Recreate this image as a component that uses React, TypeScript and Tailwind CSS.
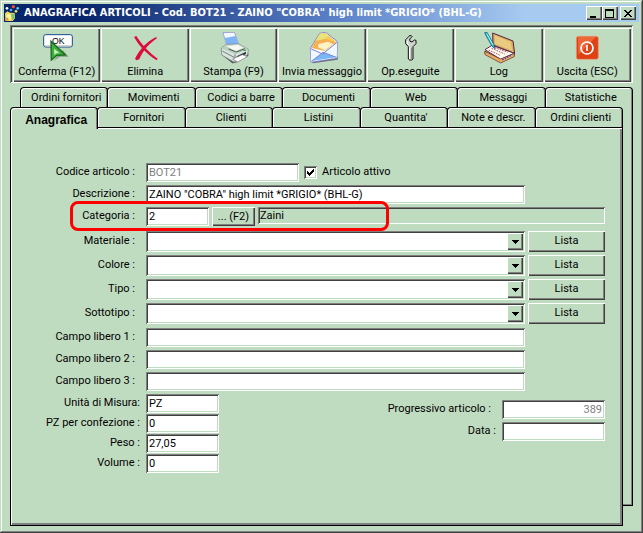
import React from 'react';

const raised = 'shadow-[inset_1px_1px_0_#fff,inset_-1px_-1px_0_#404040,inset_-2px_-2px_0_#808080]';
const groove = 'shadow-[inset_1px_1px_0_#808080,inset_-1px_-1px_0_#fff,inset_2px_2px_0_#404040]';
const sunken =
  'shadow-[inset_1px_1px_0_#808080,inset_-1px_-1px_0_#fff,inset_2px_2px_0_#404040,inset_-2px_-2px_0_#c0dcc0]';
const field = `h-[19px] min-w-0 bg-white px-[3px] outline-none ${sunken}`;

const OkIcon = () => (
  <svg viewBox="120 96 96 96" className="h-8 w-8">
    <rect x="128" y="104" width="86" height="37" rx="6" fill="#fff" stroke="#174a94" strokeWidth="3" />
    <path d="M132 137h78" stroke="#d8d4c0" strokeWidth="4" />
    <text x="153" y="132" fontSize="26" fontFamily="Liberation Sans, sans-serif" fill="#000">OK</text>
    <path d="M157 184l20-14 26 0-18-20z" fill="#8a9a8a" />
    <path d="M150 124l43 41-25 1-17 14z" fill="#3fae3f" stroke="#176b1c" strokeWidth="4" />
    <path d="M159 146l17 14-10 0-6 5z" fill="#c8f0b8" />
  </svg>
);

const DeleteIcon = () => (
  <svg viewBox="384 96 96 96" className="h-8 w-8">
    <path d="M399 111l7-3c16 25 38 50 64 68l-3 5c-29-18-51-41-68-70z" fill="#dc0c3c" />
    <path d="M465 111l3 4c-23 15-42 36-53 63l-9 3-4-5c14-28 35-51 63-65z" fill="#dc0c3c" />
  </svg>
);

const PrintIcon = () => (
  <svg viewBox="78 96 96 96" className="h-8 w-8">
    <path d="M91 166l30 24 10-1 38-22 0-8-30 18z" fill="#55555f" />
    <path d="M93 98l34-1 14 36-36 6z" fill="#f4f9ff" stroke="#8584c8" strokeWidth="2" />
    <path d="M98 114l33-6 8 24-34 5z" fill="#7eb4f4" />
    <path d="M88 144l15-11 38-1 28 16-2 16-38 24-40-23z" fill="#d9e4dc" stroke="#6f7580" strokeWidth="2" />
    <path d="M89 145l40 18 39-15-28-16-36 5z" fill="#b7d0bb" />
    <path d="M103 139l34-5 18 9-24 10z" fill="#f5f7f3" />
    <path d="M110 147l23 9 25-10" fill="none" stroke="#555" strokeWidth="3" />
    <path d="M129 163l0 24 M91 153l37 20" stroke="#777d80" strokeWidth="3" />
    <path d="M134 169l28-14 0 7-28 16z" fill="#343440" />
    <path d="M122 177l29-13 15 6-29 16z" fill="#fff" stroke="#777" strokeWidth="2" />
    <path d="M154 151h8" stroke="#38a848" strokeWidth="4" />
  </svg>
);

const MailIcon = () => (
  <svg viewBox="342 96 96 96" className="h-8 w-8">
    <path d="M357 184l77-9 4-8-1 12-74 11z" fill="#6b7590" />
    <path d="M355 145l28-45 18-3 36 28-3 48-77 13z" fill="#f8fbff" stroke="#8580d0" strokeWidth="3" />
    <path d="M359 143l24-42 17-2 33 27-34 23z" fill="#f7c94c" />
    <path d="M371 122l13-21 16-2 11 9-18 12z" fill="#e8e47a" />
    <path d="M371 123l29-7 31 12-33 25-38-9z" fill="#f4b052" />
    <path d="M379 132l30-7 15 8-26 18-20-9z" fill="#fff3c4" />
    <path d="M356 146l32 17 10-9 38-28-2 47-77 12z" fill="#eff7ff" />
    <path d="M359 183l35-26 39 15z" fill="#79b8f5" />
    <path d="M356 146l36 16 44-36 M358 184l35-27 40 15" fill="none" stroke="#7c82cf" strokeWidth="3" />
  </svg>
);

const WrenchIcon = () => (
  <svg viewBox="-21 96 96 96" className="h-8 w-8">
    <path
      d="M23 110l-9 9v12l8 9v37l4 3h6l4-3v-37l9-9v-10l-5-1-7 6-6-2-1-7 7-7-2-3h-6z"
      fill="#d0d4d0"
      stroke="#101010"
      strokeWidth="3"
    />
    <path d="M26 142v34" stroke="#fff" strokeWidth="4" />
    <path d="M31 143v33" stroke="#777" strokeWidth="3" />
    <path d="M19 122v8l6 6" fill="none" stroke="#fff" strokeWidth="3" />
  </svg>
);

const LogIcon = () => (
  <svg viewBox="246 96 96 96" className="h-8 w-8">
    <path d="M250 160l49 28 43-23 0-12-42 23-49-24z" fill="#72372d" />
    <path d="M275 99l61 24 5 37-65-25z" fill="#d8ae62" stroke="#5a2142" strokeWidth="3" />
    <path d="M281 106l48 20 5 26-52-20z" fill="#e8ca80" />
    <path d="M252 149l21-13 67 24-41 18z" fill="#fffdf2" stroke="#602848" strokeWidth="3" />
    <path d="M252 154l47 23 41-17v10l-41 19-47-25z" fill="#e2ab5e" stroke="#652b38" strokeWidth="2" />
    <path d="M263 150l34 16 M272 145l39 17 M281 143l39 14" stroke="#b15063" strokeWidth="3" strokeDasharray="5 3" />
    <path d="M304 179l26-13" stroke="#3030c0" strokeWidth="4" strokeDasharray="4 4" />
    <path d="M251 98l7-1 21 37 3 12-9-7-19-34z" fill="#21bdd5" stroke="#194c78" strokeWidth="2" />
    <path d="M257 101l19 34" stroke="#a4ffff" strokeWidth="3" />
  </svg>
);

const ExitIcon = () => (
  <svg viewBox="510 96 96 96" className="h-8 w-8">
    <rect x="526" y="109" width="66" height="69" rx="6" fill="#df4114" stroke="#e8a080" strokeWidth="2" />
    <path d="M531 111h54l-53 53z" fill="#ee6737" />
    <circle cx="558" cy="144" r="18" fill="none" stroke="#fff" strokeWidth="5" />
    <path d="M558 135v18" stroke="#fff" strokeWidth="5" />
  </svg>
);

const AppIcon = () => (
  <svg viewBox="15 12 48 54" className="h-[18px] w-4 shrink-0">
    <path d="M18 40l7-6 8 4 14 1 1 16-7 8H19z" fill="#f2d65c" />
    <path d="M22 45l8-4 6 4-1 14-13-1z" fill="#fff4a0" />
    <path d="M36 41l10 1 1 12-8 6z" fill="#73c96a" />
    <path d="M19 53h9v9h-9z" fill="#e6a02e" />
    <circle cx="24" cy="25" r="4" fill="#fff" />
    <circle cx="43" cy="20" r="5" fill="#ef4b30" />
    <circle cx="56" cy="25" r="4" fill="#48d5e8" />
    <circle cx="51" cy="34" r="4" fill="#f4e552" />
    <circle cx="36" cy="30" r="4" fill="#52a8f0" />
  </svg>
);

const actions = [
  { label: 'Conferma (F12)', icon: <OkIcon /> },
  { label: 'Elimina', icon: <DeleteIcon /> },
  { label: 'Stampa (F9)', icon: <PrintIcon /> },
  { label: 'Invia messaggio', icon: <MailIcon /> },
  { label: 'Op.eseguite', icon: <WrenchIcon /> },
  { label: 'Log', icon: <LogIcon /> },
  { label: 'Uscita (ESC)', icon: <ExitIcon /> },
];

const backTabs = ['Ordini fornitori', 'Movimenti', 'Codici a barre', 'Documenti', 'Web', 'Messaggi', 'Statistiche'];
const frontTabs = ['Anagrafica', 'Fornitori', 'Clienti', 'Listini', "Quantita'", 'Note e descr.', 'Ordini clienti'];

const Tab: React.FC<{ label: string; active?: boolean }> = ({ label, active }) => (
  <button
    type="button"
    role="tab"
    aria-selected={!!active}
    className={`min-w-0 flex-1 rounded-t-[4px] border-x border-t border-black bg-[#c0dcc0] whitespace-nowrap shadow-[inset_1px_1px_0_#fff,inset_-1px_0_0_#808080] ${
      active
        ? "relative z-10 -mb-[2px] pt-[2px] pl-1 font-['Liberation_Sans',sans-serif] text-[12px] font-bold"
        : '-ml-px pl-1 first:ml-0'
    }`}
  >
    {label}
  </button>
);

const Label: React.FC<{ id: string; children: React.ReactNode; near?: boolean }> = ({ id, children, near }) => (
  <label
    htmlFor={id}
    className={`w-[133px] shrink-0 pb-px text-right whitespace-nowrap ${near ? 'pr-[6px]' : 'pr-[11px]'}`}
  >
    {children}
  </label>
);

const ListRow: React.FC<{ id: string; label: string }> = ({ id, label }) => (
  <div className="flex h-[21px] items-center">
    <Label id={id}>{label} :</Label>
    <div className="relative mr-[3px] flex-1">
      <select id={id} className={`block h-[21px] w-full appearance-none bg-white px-1 outline-none ${sunken}`}>
        <option></option>
      </select>
      <span
        className={`pointer-events-none absolute top-[2px] right-[2px] flex h-[17px] w-4 items-center justify-center bg-[#c0dcc0] ${raised}`}
      >
        <svg viewBox="0 0 7 4" className="h-1 w-[7px]" shapeRendering="crispEdges">
          <path d="M0 0h7v1H6v1H5v1H4v1H3V3H2V2H1V1H0z" />
        </svg>
      </span>
    </div>
    <button type="button" className={`h-[21px] w-[77px] pb-px ${raised}`}>
      Lista
    </button>
  </div>
);

const TitleButton: React.FC<{ label: string; path: string }> = ({ label, path }) => (
  <button
    type="button"
    aria-label={label}
    className={`flex h-[14px] w-4 items-center justify-center bg-[#c0dcc0] ${raised}`}
  >
    <svg viewBox="0 0 10 9" className="h-[9px] w-[10px]" shapeRendering="crispEdges">
      <path d={path} />
    </svg>
  </button>
);

const App: React.FC = () => {
  return (
    <div className="flex min-h-screen flex-col bg-[#c0dcc0] px-1 pt-1 pb-[7px] font-[Roboto,sans-serif] text-[11px] leading-[14px] text-black shadow-[inset_-1px_-1px_0_#404040,inset_1px_1px_0_#c0dcc0,inset_-2px_-2px_0_#808080,inset_2px_2px_0_#fff]">
      <header className="flex h-[18px] items-center bg-[linear-gradient(90deg,#08246b_12%,#5b80c8_52%,#a6caf0_82%)] pr-[3px]">
        <AppIcon />
        <h1 className="ml-1 flex-1 truncate font-['DejaVu_Sans_Condensed','DejaVu_Sans',sans-serif] text-[11px] leading-[18px] font-bold text-white">
          ANAGRAFICA ARTICOLI - Cod. BOT21 - ZAINO "COBRA" high limit *GRIGIO* (BHL-G)
        </h1>
        <TitleButton label="Riduci a icona" path="M1 7h6v2H1z" />
        <TitleButton label="Ingrandisci" path="M0 0h9v9H0zM1 2v6h7V2z" />
        <span className="w-[2px]" />
        <TitleButton
          label="Chiudi"
          path="M1 1h2v1h1v1h2V2h1V1h2v1H8v1H7v1H6v1h1v1h1v1h1v1H7V7H6V6H4v1H3v1H1V7h1V6h1V5h1V4H3V3H2V2H1z"
        />
      </header>

      <main className="flex flex-1 flex-col px-[6px]">
        <div className={`mt-[3px] flex h-[58px] gap-px pt-[3px] pr-[2px] pb-[1px] pl-[3px] ${groove}`}>
          {actions.map((a) => (
            <button
              key={a.label}
              type="button"
              className={`flex min-w-0 flex-1 flex-col items-center pt-1 whitespace-nowrap ${raised}`}
            >
              {a.icon}
              <span className="mt-px">{a.label}</span>
            </button>
          ))}
        </div>

        <div className="mt-1 ml-[10px] flex h-5" role="tablist">
          {backTabs.map((t) => (
            <Tab key={t} label={t} />
          ))}
        </div>

        <div className="flex flex-1">
          <div className="flex min-w-0 flex-1 flex-col">
            <div className="flex h-5" role="tablist">
              {frontTabs.map((t, i) => (
                <Tab key={t} label={t} active={i === 0} />
              ))}
            </div>

            <form
              className="flex flex-1 flex-col gap-[3px] border border-black pt-[35px] pr-[17px] pl-[2px] shadow-[inset_1px_1px_0_#fff,inset_-2px_-2px_0_#808080]"
              onSubmit={(e) => e.preventDefault()}
            >
              <div className="flex items-center">
                <Label id="codice">Codice articolo :</Label>
                <input id="codice" disabled defaultValue="BOT21" className={`${field} w-[153px] text-[#808080]`} />
                <span className="relative ml-[5px] h-[13px] w-[13px]">
                  <input
                    id="attivo"
                    type="checkbox"
                    defaultChecked
                    className={`peer block h-[13px] w-[13px] appearance-none bg-white ${sunken}`}
                  />
                  <svg
                    viewBox="0 0 7 7"
                    shapeRendering="crispEdges"
                    className="pointer-events-none absolute top-[3px] left-[3px] hidden h-[7px] w-[7px] peer-checked:block"
                  >
                    <path d="M0 2h1v1h1v1h1V3h1V2h1V1h1V0h1v3H6v1H5v1H4v1H3v1H2V6H1V5H0z" />
                  </svg>
                </span>
                <label htmlFor="attivo" className="ml-[5px] pb-px">
                  Articolo attivo
                </label>
              </div>

              <div className="flex items-center pr-20">
                <Label id="descrizione">Descrizione :</Label>
                <input
                  id="descrizione"
                  defaultValue={'ZAINO "COBRA" high limit *GRIGIO* (BHL-G)'}
                  className={`${field} flex-1`}
                />
              </div>

              <div className="relative mb-[2px] flex items-center">
                <Label id="categoria">Categoria :</Label>
                <input id="categoria" defaultValue="2" className={`${field} w-[63px]`} />
                <button type="button" className={`ml-[3px] h-[19px] w-[43px] ${raised}`}>
                  ... (F2)
                </button>
                <output htmlFor="categoria" className={`ml-[3px] h-[17px] flex-1 self-start px-[2px] pt-[2px] ${groove}`}>
                  Zaini
                </output>
                <div className="pointer-events-none absolute -top-[6px] left-[57px] h-[30px] w-[319px] rounded-[8px] border-3 border-[#ff0000]" />
              </div>

              <ListRow id="materiale" label="Materiale" />
              <ListRow id="colore" label="Colore" />
              <ListRow id="tipo" label="Tipo" />
              <ListRow id="sottotipo" label="Sottotipo" />

              <div className="mt-px flex flex-col gap-[3px] pr-20">
                {[1, 2, 3].map((n) => (
                  <div key={n} className="flex items-center">
                    <Label id={`campo${n}`}>Campo libero {n} :</Label>
                    <input id={`campo${n}`} className={`${field} flex-1`} />
                  </div>
                ))}
              </div>

              <div className="flex justify-between">
                <div className="flex flex-col gap-px">
                  {[
                    ['um', 'Unità di Misura:', 'PZ'],
                    ['pz', 'PZ per confezione :', '0'],
                    ['peso', 'Peso :', '27,05'],
                    ['volume', 'Volume :', '0'],
                  ].map(([id, label, value]) => (
                    <div key={id} className="flex items-center">
                      <Label id={id} near>
                        {label}
                      </Label>
                      <input id={id} defaultValue={value} className={`${field} w-[73px]`} />
                    </div>
                  ))}
                </div>
                <div className="flex flex-col gap-[3px] pt-[6px]">
                  <div className="flex items-center">
                    <Label id="progressivo">Progressivo articolo :</Label>
                    <input
                      id="progressivo"
                      disabled
                      defaultValue="389"
                      className={`${field} w-[103px] text-right text-[#808080]`}
                    />
                  </div>
                  <div className="flex items-center">
                    <Label id="data" near>
                      Data :
                    </Label>
                    <input id="data" className={`${field} w-[103px]`} />
                  </div>
                </div>
              </div>
            </form>
          </div>
          <div className="mb-5 w-[10px] border-r border-b border-black shadow-[inset_-1px_-1px_0_#808080]" />
        </div>
      </main>
    </div>
  );
};

export default App;
